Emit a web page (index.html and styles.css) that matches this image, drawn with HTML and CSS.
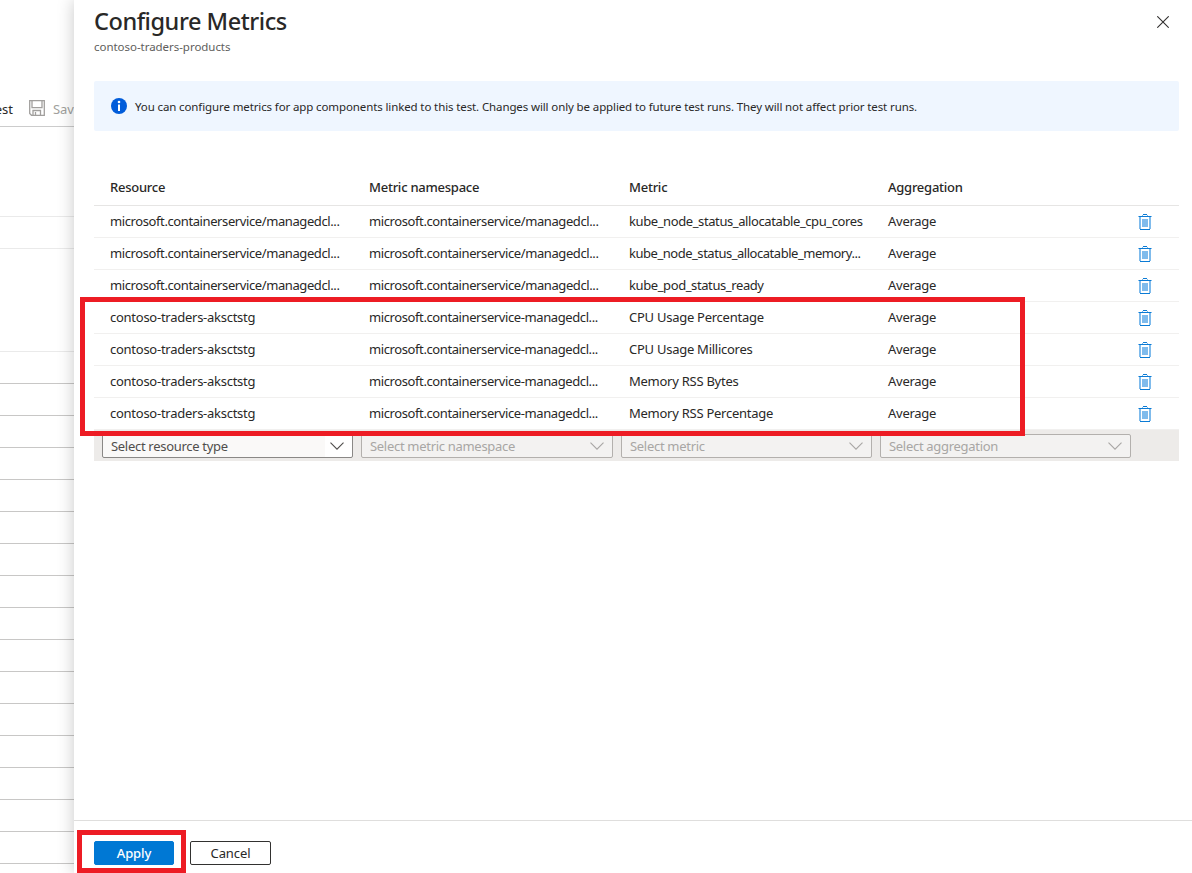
FILE: index.html
```
<!DOCTYPE html>
<html lang="en">
<head>
<meta charset="utf-8">
<title>Configure Metrics</title>
<link rel="stylesheet" href="styles.css">
</head>
<body>
<svg class="defs" width="0" height="0" aria-hidden="true">
  <symbol id="trash" viewBox="0 0 14 16">
    <path fill="#7fbbec" d="M1 3h2v12H1zM11 3h2v12h-2zM4 5h6v8H4zM4 1h1v1H4zM9 1h1v1H9zM0 2h1v1H0zM13 2h1v1h-1z"/>
    <path fill="#0b7bd5" d="M5 0h4v1H5zM1 2h12v1H1zM2 15h10v1H2z"/>
  </symbol>
  <symbol id="chevron" viewBox="0 0 14 8">
    <path fill="none" stroke="currentColor" stroke-width="1.1" d="M.5 .7 7 7.2 13.500 .7"/>
  </symbol>
</svg>
<div class="app">
  <div class="page">
    <div class="toolbar">
      <span class="test">est</span>
      <svg class="save-icon" width="16" height="16" viewBox="0 0 16 16" fill="none" stroke="#a19f9d" stroke-width="1.300"><path d="M.7 .7h14.600v14.600H2.500L.7 13.500zM3 .7v7h10v-7M4 15v-4.500h7.500V15M6.500 12v3"/></svg>
      <span class="save">Save</span>
    </div>
    <div class="block block-a"></div>
    <div class="block block-b"></div>
    <div class="block block-c"></div>
    <div class="lines">
      <i></i><i></i><i></i><i></i><i></i><i></i><i></i><i></i><i></i><i></i><i></i><i></i><i></i><i></i><i></i><i></i>
    </div>
  </div>
  <section class="panel">
    <header class="head">
      <div>
        <h1>Configure Metrics</h1>
        <p class="sub">contoso-traders-products</p>
      </div>
      <svg class="close" width="12" height="12" viewBox="0 0 12 12"><path d="M.3 .3l11.400 11.400M11.700 .3L.3 11.700" stroke="#323130" stroke-width="1.100"/></svg>
    </header>
    <div class="info">
      <svg width="16" height="16" viewBox="0 0 16 16"><circle cx="8" cy="8" r="8" fill="#015cda"/><circle cx="8" cy="4" r="1.300" fill="#fff"/><path fill="#fff" d="M7 6.500h2V13H7z"/></svg>
      <span>You can configure metrics for app components linked to this test. Changes will only be applied to future test runs. They will not affect prior test runs.</span>
    </div>
    <div class="table">
      <div class="row row-head"><span>Resource</span><span>Metric namespace</span><span>Metric</span><span>Aggregation</span></div>
      <div class="row"><span class="tight">microsoft.containerservice/managedcl...</span><span class="tight">microsoft.containerservice/managedcl...</span><span class="tight">kube_node_status_allocatable_cpu_cores</span><span>Average</span><svg><use href="#trash"/></svg></div>
      <div class="row"><span class="tight">microsoft.containerservice/managedcl...</span><span class="tight">microsoft.containerservice/managedcl...</span><span class="tighter">kube_node_status_allocatable_memory...</span><span>Average</span><svg><use href="#trash"/></svg></div>
      <div class="row"><span class="tight">microsoft.containerservice/managedcl...</span><span class="tight">microsoft.containerservice/managedcl...</span><span class="tight">kube_pod_status_ready</span><span>Average</span><svg><use href="#trash"/></svg></div>
      <div class="row"><span>contoso-traders-aksctstg</span><span class="tight">microsoft.containerservice-managedcl...</span><span>CPU Usage Percentage</span><span>Average</span><svg><use href="#trash"/></svg></div>
      <div class="row"><span>contoso-traders-aksctstg</span><span class="tight">microsoft.containerservice-managedcl...</span><span>CPU Usage Millicores</span><span>Average</span><svg><use href="#trash"/></svg></div>
      <div class="row"><span>contoso-traders-aksctstg</span><span class="tight">microsoft.containerservice-managedcl...</span><span>Memory RSS Bytes</span><span>Average</span><svg><use href="#trash"/></svg></div>
      <div class="row"><span>contoso-traders-aksctstg</span><span class="tight">microsoft.containerservice-managedcl...</span><span>Memory RSS Percentage</span><span>Average</span><svg><use href="#trash"/></svg></div>
      <div class="edit">
        <div class="select active"><span>Select resource type</span><svg><use href="#chevron"/></svg></div>
        <div class="select"><span>Select metric namespace</span><svg><use href="#chevron"/></svg></div>
        <div class="select"><span>Select metric</span><svg><use href="#chevron"/></svg></div>
        <div class="select"><span>Select aggregation</span><svg><use href="#chevron"/></svg></div>
      </div>
    </div>
    <footer class="foot">
      <button class="btn primary">Apply</button>
      <button class="btn">Cancel</button>
    </footer>
  </section>
  <div class="mark mark-rows"></div>
  <div class="mark mark-apply"></div>
</div>
</body>
</html>
```
FILE: styles.css
```
* { box-sizing: border-box; }
body { margin: 0; font-family: "Noto Sans", sans-serif; font-size: 13px; color: #292827; }
.defs { position: absolute; }
.app { position: relative; display: flex; width: 1192px; height: 873px; overflow: hidden; background: #fff; }
.page { width: 74px; flex: none; overflow: hidden; }
.toolbar { height: 127px; border-bottom: 1px solid #ccc; padding-top: 100px; display: flex; line-height: 18px; white-space: nowrap; }
.test { width: 29px; flex: none; display: flex; justify-content: flex-end; padding-right: 16px; }
.save-icon { flex: none; }
.save { margin-left: 8px; color: #a19f9d; letter-spacing: -.1px; }
.block { border-bottom: 1px solid #eaeaea; }
.block-a { height: 90px; }
.block-b { height: 32px; }
.block-c { height: 103px; }
.lines i { display: block; height: 32px; border-bottom: 1px solid #c8c7c6; }
.panel { position: relative; flex: 1; display: flex; flex-direction: column; background: #fff; box-shadow: 0 0 16px rgba(0,0,0,.22); }
.head { height: 81px; display: flex; justify-content: space-between; padding: 6px 23px 0 20px; }
h1 { margin: 0; font-size: 23.500px; line-height: 31px; font-weight: 550; letter-spacing: -.45px; }
.sub { margin: 0; font-size: 11.500px; line-height: 19px; letter-spacing: -.04px; color: #605e5c; }
.close { margin-top: 10px; }
.info { height: 50px; margin: 0 13px 0 20px; padding-left: 17px; display: flex; align-items: center; gap: 8px; background: #eff6ff; border-radius: 2px; font-size: 11.500px; letter-spacing: -.117px; white-space: nowrap; }
.table { margin: 39px 13px 0 20px; }
.row { display: grid; grid-template-columns: 259px 260px 259px 250px 14px; align-items: center; height: 32px; padding-left: 16px; border-bottom: 1px solid #f1f0ef; white-space: nowrap; letter-spacing: -.26px; }
.row span { line-height: 18px; padding-bottom: 1px; }
.row .tight { letter-spacing: -.4px; }
.row .tighter { letter-spacing: -.47px; }
.row-head { height: 36px; font-weight: 550; border-color: #e6e5e4; letter-spacing: -.25px; }
.row svg { width: 14px; height: 16px; margin-top: 1px; shape-rendering: crispEdges; }
.edit { display: grid; grid-template-columns: 251px 252px 251px 251px; column-gap: 8px; height: 31px; padding: 4px 0 0 8px; background: #edebe9; }
.select { height: 24px; display: flex; justify-content: space-between; align-items: center; padding: 0 8px; border: 1px solid #b3b0ad; border-radius: 2px; background: #f3f2f1; color: #a8a6a4; letter-spacing: -.3px; white-space: nowrap; }
.select svg { width: 14px; height: 8px; }
.active { background: linear-gradient(90deg, #faf9f8 222px, #fff 222px); border-color: #8a8886; color: #504e4c; }
.foot { margin-top: auto; height: 53px; display: flex; align-items: flex-start; gap: 16px; padding: 20px 20px 0; border-top: 1px solid #dfdedd; }
.btn { width: 81px; height: 24px; padding: 0; font: 13px "Noto Sans", sans-serif; letter-spacing: -.1px; color: #292827; background: #fff; border: 1px solid #323130; border-radius: 2px; }
.primary { width: 80px; background: #0078d4; border-color: #0078d4; color: #fff; font-weight: 500; }
.mark { position: absolute; border: 5px solid #ed1c24; }
.mark-rows { left: 80px; top: 297px; width: 945px; height: 139px; }
.mark-apply { left: 77px; top: 830px; width: 109px; height: 43px; }
```
